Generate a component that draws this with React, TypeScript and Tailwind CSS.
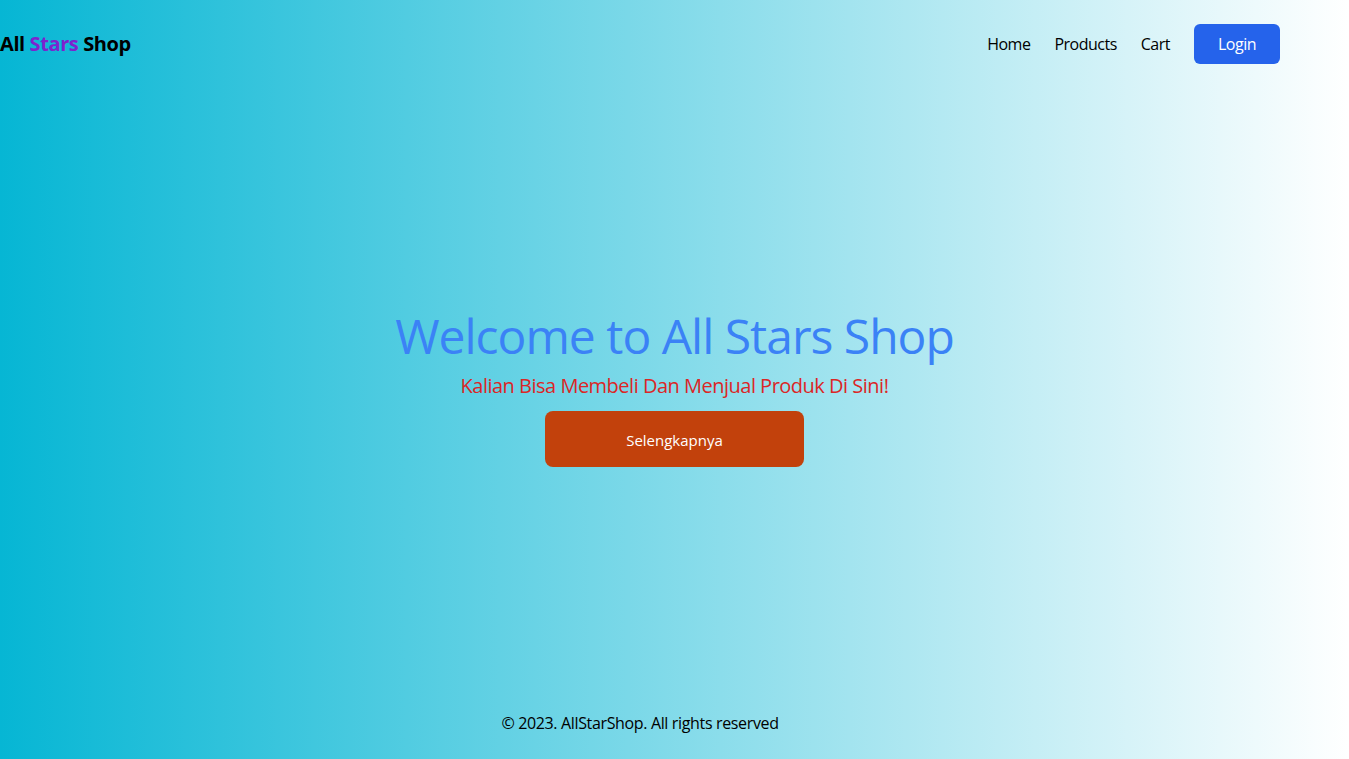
export default function App() {
  return (
    <div
      className="flex min-h-screen flex-col bg-[linear-gradient(to_right,#06b6d4,#ffffff)] text-black"
      style={{ fontFamily: '"Open Sans", "Noto Sans", sans-serif' }}
    >
      {/* Navbar */}
      <nav className="container flex items-center justify-between py-6">
        <a href="#" className="text-xl font-bold tracking-[-0.4px]">
          All <span className="text-[#7e22ce]">Stars</span> Shop
        </a>
        <ul className="flex items-center gap-6 text-base tracking-[-0.5px]">
          <li>
            <a href="#">Home</a>
          </li>
          <li>
            <a href="#">Products</a>
          </li>
          <li>
            <a href="#">Cart</a>
          </li>
          <li>
            <button className="h-10 rounded-md bg-[#2563eb] px-6 text-white">Login</button>
          </li>
        </ul>
      </nav>

      {/* Hero */}
      <main className="flex flex-1 flex-col items-center justify-center pt-[4px] text-center">
        <h1 className="text-5xl tracking-[-1px] text-[#3b82f6]">Welcome to All Stars Shop</h1>
        <p className="mt-[12px] text-xl tracking-[-0.5px] text-[#dc2626]">
          Kalian Bisa Membeli Dan Menjual Produk Di Sini!
        </p>
        <button className="mt-[11px] h-14 w-[259px] rounded-lg bg-[#c2410c] pt-[3px] text-[15px] text-white">
          Selengkapnya
        </button>
      </main>

      {/* Footer */}
      <footer className="container py-6 text-center text-base tracking-[-0.35px]">
        © 2023. AllStarShop. All rights reserved
      </footer>
    </div>
  );
}
